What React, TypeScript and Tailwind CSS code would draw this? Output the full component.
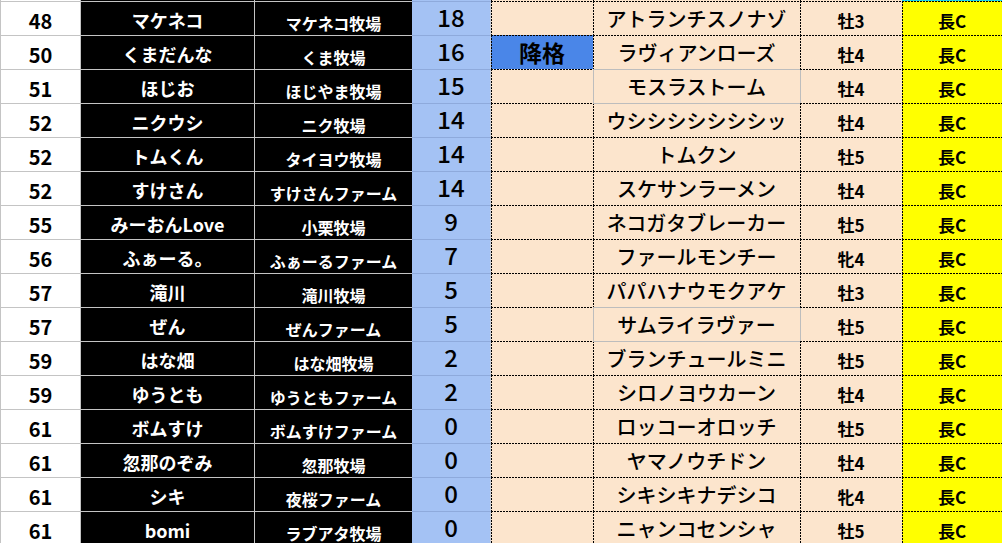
import React from "react";

type Row = [number, string, string, number, string, string, string, string];

const rows: Row[] = [
  [48, "マケネコ", "マケネコ牧場", 18, "", "アトランチスノナゾ", "牡3", "長C"],
  [50, "くまだんな", "くま牧場", 16, "降格", "ラヴィアンローズ", "牡4", "長C"],
  [51, "ほじお", "ほじやま牧場", 15, "", "モスラストーム", "牡4", "長C"],
  [52, "ニクウシ", "ニク牧場", 14, "", "ウシシシシシシシッ", "牡4", "長C"],
  [52, "トムくん", "タイヨウ牧場", 14, "", "トムクン", "牡5", "長C"],
  [52, "すけさん", "すけさんファーム", 14, "", "スケサンラーメン", "牡4", "長C"],
  [55, "みーおんLove", "小栗牧場", 9, "", "ネコガタブレーカー", "牡5", "長C"],
  [56, "ふぁーる。", "ふぁーるファーム", 7, "", "ファールモンチー", "牝4", "長C"],
  [57, "滝川", "滝川牧場", 5, "", "パパハナウモクアケ", "牡3", "長C"],
  [57, "ぜん", "ぜんファーム", 5, "", "サムライラヴァー", "牡5", "長C"],
  [59, "はな畑", "はな畑牧場", 2, "", "ブランチュールミニ", "牡5", "長C"],
  [59, "ゆうとも", "ゆうともファーム", 2, "", "シロノヨウカーン", "牡4", "長C"],
  [61, "ボムすけ", "ボムすけファーム", 0, "", "ロッコーオロッチ", "牡5", "長C"],
  [61, "忽那のぞみ", "忽那牧場", 0, "", "ヤマノウチドン", "牡4", "長C"],
  [61, "シキ", "夜桜ファーム", 0, "", "シキシキナデシコ", "牝4", "長C"],
  [61, "bomi", "ラブアタ牧場", 0, "", "ニャンコセンシャ", "牡5", "長C"],
];

const cell = "h-[34px] flex items-center justify-center whitespace-nowrap";
const lined = "h-[34px] flex items-center justify-center whitespace-nowrap border-t";

/* dotted top + dotted left */
const peachDD =
  "[background:repeating-linear-gradient(90deg,#000_0_2px,transparent_2px_3px)_top_left/100%_1px_no-repeat,repeating-linear-gradient(180deg,#000_0_2px,transparent_2px_3px)_top_left/1px_100%_no-repeat,#fce5cd]";
const blueDD =
  "[background:repeating-linear-gradient(90deg,#000_0_2px,transparent_2px_3px)_top_left/100%_1px_no-repeat,repeating-linear-gradient(180deg,#000_0_2px,transparent_2px_3px)_top_left/1px_100%_no-repeat,#4a86e8]";
const yellowDD =
  "[background:repeating-linear-gradient(90deg,#000_0_2px,transparent_2px_3px)_top_left/100%_1px_no-repeat,repeating-linear-gradient(180deg,#000_0_2px,transparent_2px_3px)_top_left/1px_100%_no-repeat,#ffff00]";
/* solid top + solid left */
const peachSS =
  "[background:linear-gradient(#bdbdbd,#bdbdbd)_top_left/100%_1px_no-repeat,linear-gradient(#bdbdbd,#bdbdbd)_top_left/1px_100%_no-repeat,#fce5cd]";
/* solid top + dotted left */
const peachSD =
  "[background:linear-gradient(#bdbdbd,#bdbdbd)_top_left/100%_1px_no-repeat,repeating-linear-gradient(180deg,#000_0_2px,transparent_2px_3px)_top_left/1px_100%_no-repeat,#fce5cd]";
/* dotted top + solid left */
const peachDS =
  "[background:repeating-linear-gradient(90deg,#000_0_2px,transparent_2px_3px)_top_left/100%_1px_no-repeat,linear-gradient(#bdbdbd,#bdbdbd)_top_left/1px_100%_no-repeat,#fce5cd]";
/* dotted left only (strip) */
const peachL =
  "[background:repeating-linear-gradient(180deg,#000_0_2px,transparent_2px_3px)_top_left/1px_100%_no-repeat,#fce5cd]";

const cols = "grid grid-cols-[80px_174px_158px_79px_102px_207px_102px_100px]";

export default function App() {
  return (
    <div className="w-[1002px] h-[543px] overflow-hidden bg-white font-['Noto_Sans_CJK_JP','Noto_Sans',sans-serif]">
      {/* partial previous row */}
      <div className={`${cols} h-px`}>
        <div className="bg-white border-l border-[#c4c4c4]" />
        <div className="bg-black border-l border-[#c4c4c4]" />
        <div className="bg-black border-l border-[#c4c4c4]" />
        <div className="bg-[#a4c2f4] border-r border-[#c8cfdb]" />
        <div className={peachL} />
        <div className={peachL} />
        <div className={peachL} />
        <div className="bg-[#1fd6f0]" />
      </div>
      {rows.map((r, i) => {
        const solidF = i === 2 || i === 9;
        const solidTopF = i === 3 || i === 10;
        const fBg = solidF ? peachSS : solidTopF ? peachSD : peachDD;
        const gBg = solidF ? peachDS : peachDD;
        return (
          <div key={i} className={cols}>
            <div className={`${lined} bg-white border-l border-[#c4c4c4] text-black font-bold text-[20px] pt-[5px]`}>
              {r[0]}
            </div>
            <div className={`${lined} bg-black border-l border-[#c4c4c4] text-white font-bold text-[18px] pt-[4px]`}>
              {r[1]}
            </div>
            <div className={`${lined} bg-black border-l border-[#c4c4c4] text-white font-bold text-[16px] pt-[9px]`}>
              {r[2]}
            </div>
            <div className={`${lined} bg-[#a4c2f4] border-t-[#8eaadc] border-r border-r-[#c8cfdb] text-black font-medium text-[24px] pb-[3px]`}>
              {r[3]}
            </div>
            <div className={`${cell} ${r[4] ? blueDD : peachDD} text-black font-bold text-[23px]`}>
              {r[4]}
            </div>
            <div className={`${cell} ${fBg} text-black font-medium text-[20px] pt-[1px]`}>
              {r[5]}
            </div>
            <div className={`${cell} ${gBg} text-black font-bold text-[17px] pt-[5px]`}>
              {r[6]}
            </div>
            <div className={`${cell} ${yellowDD} text-black font-bold text-[17px] pt-[5px]`}>
              {r[7]}
            </div>
          </div>
        );
      })}
    </div>
  );
}
